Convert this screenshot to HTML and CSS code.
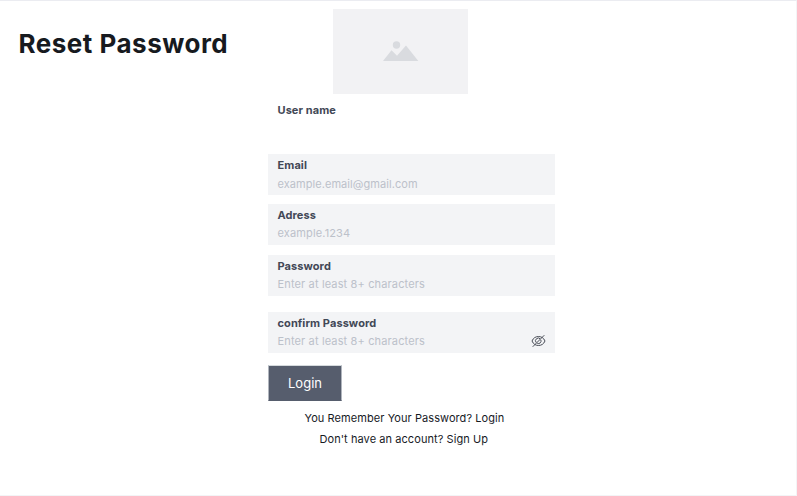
FILE: index.html
```html
<!DOCTYPE html>
<html lang="en">
<head>
<meta charset="utf-8">
<title>Reset Password</title>
<link rel="stylesheet" href="styles.css">
</head>
<body>
<main class="page">
  <h1 class="title">Reset Password</h1>
  <form class="form">
    <div class="picture">
      <svg width="36" height="20" viewBox="0 0 36 20" fill="#d9dbdf"><circle cx="13.5" cy="4" r="3.7"/><path d="M0 20 8.5 9.3l5.500 5.400L23 4.600 35.300 20Z"/></svg>
    </div>
    <div class="label username">User name</div>
    <div class="field">
      <span class="label">Email</span>
      <span class="hint email">example.email@gmail.com</span>
    </div>
    <div class="field address">
      <span class="label">Adress</span>
      <span class="hint number">example.1234</span>
    </div>
    <div class="field password">
      <span class="label">Password</span>
      <span class="hint wide">Enter at least 8+ characters</span>
    </div>
    <div class="field confirm">
      <span class="label">confirm Password</span>
      <span class="row">
        <span class="hint wide">Enter at least 8+ characters</span>
        <svg class="eye" width="15" height="14" viewBox="0 0 15 14" fill="none" stroke="#4a4e58" stroke-width="1"><path d="M1 7C2.300 3.900 4.700 2.500 7.500 2.500S12.700 3.900 14 7c-1.300 3.100-3.700 4.500-6.500 4.500S2.300 10.100 1 7Z"/><path d="M5.200 8.600A2.700 2.700 0 0 1 9.300 5M9.900 6a2.700 2.700 0 0 1-3.600 3.400M1.700 12.800 13.300 1.200"/></svg>
      </span>
    </div>
    <button class="login" type="button">Login</button>
    <p class="link remember">You Remember Your Password? Login</p>
    <p class="link signup">Don't have an account? Sign Up</p>
  </form>
</main>
</body>
</html>
```
FILE: styles.css
```css
* { box-sizing: border-box; }
body { margin: 0; font-family: Inter, "Liberation Sans", sans-serif; background: #fff; }
.page {
  display: flex;
  align-items: flex-start;
  width: 797px;
  height: 496px;
  border-top: 1px solid #ebecf1;
  border-right: 1px solid #f3f4f6;
  border-bottom: 1px solid #f3f4f6;
}
.title {
  width: 268px;
  margin: 0;
  padding: 26px 0 0 18.500px;
  font-size: 26px;
  line-height: 34px;
  font-weight: 700;
  letter-spacing: 0.5px;
  color: #171a1f;
  white-space: nowrap;
}
.form { display: flex; flex-direction: column; width: 287px; padding-top: 8px; }
.picture {
  display: flex;
  align-items: center;
  justify-content: center;
  width: 135px;
  height: 85px;
  margin-left: 65px;
  padding-bottom: 2px;
  background: #f2f2f4;
}
.label { font-size: 11px; line-height: 18px; font-weight: 700; letter-spacing: 0.08px; color: #424856; white-space: nowrap; }
.username { padding-left: 9.500px; margin: 7px 0 35px; }
.field {
  display: flex;
  flex-direction: column;
  height: 41px;
  padding: 2px 9px 0 9.500px;
  background: #f3f4f6;
}
.hint { font-size: 11px; line-height: 18px; letter-spacing: 0.06px; color: #bcc1ca; white-space: nowrap; }
.field .hint { margin-top: 1px; }
.address .hint, .password .hint, .confirm .hint { margin-top: 0; }
.number, .wide { letter-spacing: 0.14px; }
.address { margin-top: 9px; }
.password { margin-top: 10px; }
.confirm { margin-top: 16px; }
.row { display: flex; justify-content: space-between; align-items: center; }
.login {
  width: 74px;
  height: 36px;
  margin-top: 12px;
  padding: 0;
  border: 1px solid #d5dadd;
  border-right-color: #b0b5bd;
  border-bottom-color: #565d6d;
  border-left-color: #b0b5bd;
  background: #565d6d;
  color: #fff;
  font: 400 13px/20px Inter, "Liberation Sans", sans-serif;
}
.link { margin: 0; font-size: 11px; line-height: 18px; letter-spacing: 0.07px; color: #171a1f; white-space: nowrap; }
.remember { padding-left: 36.500px; margin-top: 8px; }
.signup { padding-left: 51.500px; margin-top: 3px; }
```
